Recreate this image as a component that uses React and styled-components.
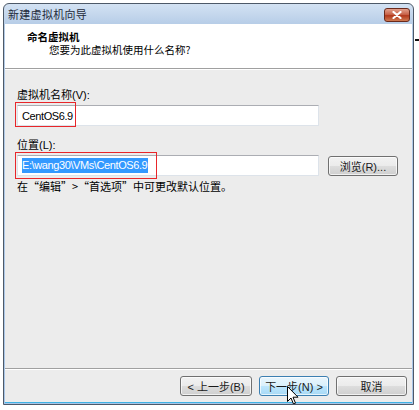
import React from "react";
import styled, { createGlobalStyle } from "styled-components";

const GlobalStyle = createGlobalStyle`
    html, body { margin: 0; padding: 0; background: #ffffff; }
    body { font-family: "Liberation Sans", "Noto Sans CJK SC", sans-serif; font-size: 11px; color: #000; }
`;

const Page = styled.div`
    position: relative;
    width: 419px;
    height: 410px;
    padding: 3px 0 0 3px;
    box-sizing: border-box;
    &::after {
        content: "";
        position: absolute;
        left: 415px;
        top: 39px;
        width: 4px;
        height: 2px;
        background: #111;
    }
`;

const Window = styled.div`
    width: 411px;
    height: 402px;
    box-sizing: border-box;
    border: 1px solid #4d5968;
    border-radius: 6px 6px 0 0;
    background: linear-gradient(#d3e2f3, #b4cbe6 22px, #a9c6e8);
    display: flex;
    flex-direction: column;
    overflow: hidden;
`;

const TitleBar = styled.div`
    height: 20px;
    flex: none;
    display: flex;
    align-items: center;
    justify-content: space-between;
    padding: 0 3px 0 4px;
`;

const Title = styled.span`
    font-family: "Noto Sans CJK SC", sans-serif;
    font-size: 11px;
    color: #1e2a3a;
    letter-spacing: 0.3px;
`;

const CloseButton = styled.div`
    width: 26px;
    height: 14px;
    margin-top: 1px;
    box-sizing: border-box;
    border: 1px solid #6a2a1c;
    border-radius: 3px;
    background: linear-gradient(#e3a08c, #c8644a 45%, #b2391c 55%, #cf7a52);
    display: flex;
    align-items: center;
    justify-content: center;
`;

const Client = styled.div`
    flex: 1;
    margin: 0 1px 1px 1px;
    border-bottom: 1px solid #3fb2e4;
    display: flex;
    flex-direction: column;
    background: #ececec;
`;

const Header = styled.div`
    height: 45px;
    flex: none;
    background: #ffffff;
    border-bottom: 1px solid #a0a0a0;
    box-shadow: 0 1px 0 #ffffff;
    padding: 7px 0 0 22px;
    box-sizing: border-box;
    display: flex;
    flex-direction: column;
    gap: 2px;
`;

const HeaderTitle = styled.div`
    font-family: "Noto Sans CJK SC", sans-serif;
    font-weight: bold;
    font-size: 10.5px;
    line-height: 11px;
`;

const HeaderSub = styled.div`
    font-family: "Noto Sans CJK SC", sans-serif;
    font-size: 10.5px;
    line-height: 11px;
    padding-left: 22px;
`;

const Body = styled.div`
    flex: 1;
    padding: 19px 0 0 12px;
    display: flex;
    flex-direction: column;
`;

const Label = styled.div`
    line-height: 14px;
    height: 14px;
    margin-top: ${(p) => p.$top || 0}px;
`;

const Row = styled.div`
    display: flex;
    align-items: center;
    gap: 9px;
    margin-top: 3px;
`;

const FieldWrap = styled.div`
    position: relative;
`;

const TextBox = styled.div`
    width: 302px;
    height: 21px;
    box-sizing: border-box;
    background: #ffffff;
    border: 1px solid #dde3ea;
    border-top-color: #abadb3;
    padding-left: 4px;
    display: flex;
    align-items: center;
    font-size: 11px;
    letter-spacing: -0.4px;
`;

const Selected = styled.span`
    background: #3399ff;
    color: #ffffff;
    line-height: 15px;
    padding-right: 1px;
`;

const Marker = styled.div`
    position: absolute;
    left: -2px;
    top: -3px;
    width: ${(p) => p.$w}px;
    height: ${(p) => p.$h}px;
    box-sizing: border-box;
    border: 1px solid #e8262a;
    pointer-events: none;
`;

const Button = styled.div`
    width: ${(p) => p.$w || 71}px;
    height: 20px;
    box-sizing: border-box;
    border: 1px solid ${(p) => (p.$hot ? "#3c7fb1" : "#707070")};
    border-radius: 3px;
    background: ${(p) =>
        p.$hot
            ? "linear-gradient(#eaf6fd, #d9f0fc 50%, #bee6fd 50%, #a7d9f5)"
            : "linear-gradient(#f2f2f2, #ebebeb 50%, #dddddd 50%, #cfcfcf)"};
    box-shadow: inset 0 0 0 1px rgba(255, 255, 255, 0.7);
    display: flex;
    align-items: center;
    justify-content: center;
    font-size: 11px;
    color: #1a1a1a;
`;

const Hint = styled.div`
    margin-top: 3px;
    line-height: 14px;
    font-family: "Noto Sans CJK SC", sans-serif;
    font-size: 11px;
`;

const Footer = styled.div`
    position: relative;
    height: 33px;
    flex: none;
    border-top: 1px solid #a0a0a0;
    box-shadow: inset 0 1px 0 #ffffff;
    display: flex;
    align-items: center;
    justify-content: flex-end;
    gap: 7px;
    padding: 0 5px 0 0;
`;

const Cursor = styled.svg`
    position: absolute;
    left: 282px;
    top: 17px;
`;

function CloseGlyph() {
    return (
        <svg width="10" height="8" viewBox="0 0 10 8">
            <path d="M1.5 1 L8.5 7 M8.5 1 L1.5 7" stroke="#ffffff" strokeWidth="2.2" strokeLinecap="round" />
        </svg>
    );
}

export default function App() {
    return (
        <Page>
            <GlobalStyle />
            <Window>
                <TitleBar>
                    <Title>新建虚拟机向导</Title>
                    <CloseButton><CloseGlyph /></CloseButton>
                </TitleBar>
                <Client>
                    <Header>
                        <HeaderTitle>命名虚拟机</HeaderTitle>
                        <HeaderSub>您要为此虚拟机使用什么名称?</HeaderSub>
                    </Header>
                    <Body>
                        <Label>虚拟机名称(V):</Label>
                        <Row>
                            <FieldWrap>
                                <TextBox>CentOS6.9</TextBox>
                                <Marker $w={61} $h={25} />
                            </FieldWrap>
                        </Row>
                        <Label $top={12}>位置(L):</Label>
                        <Row>
                            <FieldWrap>
                                <TextBox><Selected>E:\wang30\VMs\CentOS6.9</Selected></TextBox>
                                <Marker $w={142} $h={27} />
                            </FieldWrap>
                            <Button $w={70}>浏览(R)...</Button>
                        </Row>
                        <Hint>在“编辑”&gt;“首选项”中可更改默认位置。</Hint>
                    </Body>
                    <Footer>
                        <Button $w={72}>&lt; 上一步(B)</Button>
                        <Button $w={70} $hot>下一步(N) &gt;</Button>
                        <Button $w={71}>取消</Button>
                        <Cursor width="12" height="19" viewBox="0 0 12 19">
                            <path d="M0.5 0.5 L0.5 15.5 L4 12 L6.5 18 L8.5 17.2 L6 11.2 L11 11.2 Z" fill="#ffffff" stroke="#000000" strokeWidth="1" />
                        </Cursor>
                    </Footer>
                </Client>
            </Window>
        </Page>
    );
}
